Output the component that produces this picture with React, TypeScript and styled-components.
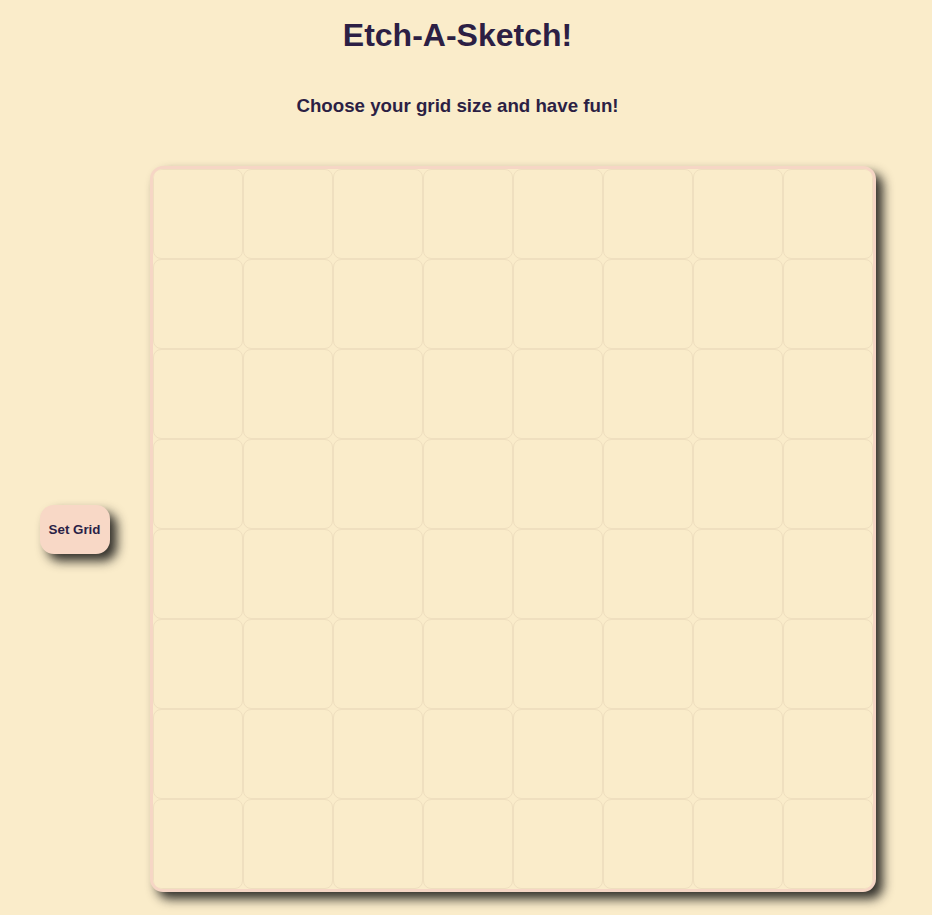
import React from "react";
import styled, { createGlobalStyle } from "styled-components";

const GlobalStyle = createGlobalStyle`
  html {
    overflow: hidden;
    background: #faecca;
  }
  body {
    margin: 0;
    padding: 0;
    background: #faecca;
    font-family: "Liberation Sans", Arial, sans-serif;
    color: #2c1f44;
  }
`;

const Page = styled.div`
  width: 915px;
  padding-bottom: 20px;
  display: flex;
  flex-direction: column;
  align-items: center;
`;

const Title = styled.h1`
  margin: 17px 0 0;
  font-size: 32px;
  font-weight: bold;
  line-height: 37px;
`;

const Subtitle = styled.h3`
  margin: 41px 0 0;
  font-size: 18.72px;
  font-weight: bold;
  line-height: 22px;
`;

const Workspace = styled.div`
  margin-top: 49px;
  display: flex;
  align-items: center;
  gap: 40px;
`;

const SetGridButton = styled.button`
  width: 70px;
  height: 49px;
  border: none;
  border-radius: 14px;
  background: #f8d8c6;
  color: #2b1f47;
  font-family: "Liberation Sans", Arial, sans-serif;
  font-size: 13.33px;
  font-weight: bold;
  padding: 0;
  box-shadow: 7px 7px 11px rgba(15, 15, 15, 0.85);
  cursor: pointer;
`;

const Board = styled.div<{ $size: number }>`
  display: grid;
  grid-template-columns: repeat(${(p) => p.$size}, 90px);
  grid-template-rows: repeat(${(p) => p.$size}, 90px);
  border: 3px solid #f6d6c5;
  border-radius: 13px;
  background: #faecca;
  box-shadow: 7px 7px 11px rgba(15, 15, 15, 0.85);
  overflow: hidden;
`;

const Cell = styled.div`
  box-sizing: border-box;
  border: 1px solid #efdfbf;
  border-radius: 8px;
  background: #faecca;
`;

export default function App() {
  const size = 8;
  const cells = Array.from({ length: size * size });
  return (
    <>
      <GlobalStyle />
      <Page>
        <Title>Etch-A-Sketch!</Title>
        <Subtitle>Choose your grid size and have fun!</Subtitle>
        <Workspace>
          <SetGridButton>Set Grid</SetGridButton>
          <Board $size={size}>
            {cells.map((_, i) => (
              <Cell key={i} />
            ))}
          </Board>
        </Workspace>
      </Page>
    </>
  );
}
